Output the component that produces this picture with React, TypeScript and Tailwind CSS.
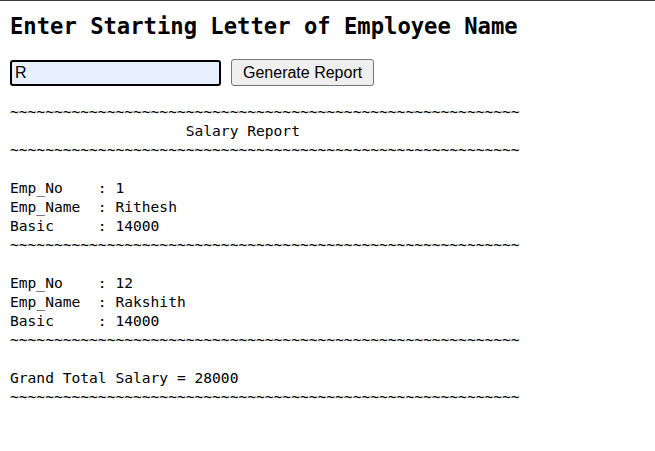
import React from "react";

const T = "~".repeat(58);

const lines = [
  T,
  "                    Salary Report",
  T,
  "",
  "Emp_No    : 1",
  "Emp_Name  : Rithesh",
  "Basic     : 14000",
  T,
  "",
  "Emp_No    : 12",
  "Emp_Name  : Rakshith",
  "Basic     : 14000",
  T,
  "",
  "Grand Total Salary = 28000",
  T,
];

export default function App() {
  return (
    <div className="min-h-screen bg-white border-t border-[#3c3f3c] px-[10px] text-black">
      <h2 className="m-0 pt-[11px] font-bold text-[22.2px] leading-[28px] font-['DejaVu_Sans_Mono',monospace]">
        Enter Starting Letter of Employee Name
      </h2>
      <div className="flex items-center gap-[10px] mt-[19px]">
        <input
          defaultValue="R"
          className="w-[211px] h-[26px] box-border border-2 border-black rounded-[3px] bg-[#e8f0fe] px-[3px] text-[16px] font-['Liberation_Sans',Arial,sans-serif] outline-none"
        />
        <button className="h-[27px] box-border px-[11px] border border-[#767676] rounded-[3px] bg-[#efefef] text-[16px] leading-[18px] font-['Liberation_Sans',Arial,sans-serif] text-black">
          Generate Report
        </button>
      </div>
      <pre className="m-0 mt-[16px] text-[14.6px] leading-[19px] font-['DejaVu_Sans_Mono',monospace]">
        {lines.join("\n")}
      </pre>
    </div>
  );
}
